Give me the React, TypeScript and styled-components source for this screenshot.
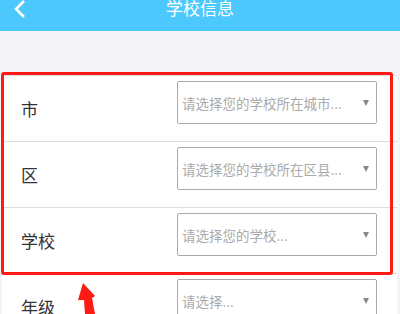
import React from "react";
import styled, { createGlobalStyle } from "styled-components";

const Global = createGlobalStyle`
  html, body { margin: 0; padding: 0; }
  body {
    background: #f4f4f8;
    font-family: "Noto Sans CJK SC", "Noto Sans", sans-serif;
    width: 400px;
    height: 314px;
    overflow: hidden;
  }
`;

const Page = styled.div`
  position: relative;
  width: 400px;
  height: 314px;
  overflow: hidden;
  background: #f4f4f8;
`;

const Header = styled.header`
  height: 31px;
  overflow: hidden;
  background: #4cc8fd;
`;

const HeaderBar = styled.div`
  height: 44px;
  margin-top: -14px;
  display: grid;
  grid-template-columns: 60px 1fr 60px;
  align-items: center;
`;

const BackButton = styled.div`
  display: flex;
  align-items: center;
  padding-left: 13px;
  padding-top: 2px;
`;

const Title = styled.h1`
  margin: 0;
  text-align: center;
  color: #ffffff;
  font-size: 17px;
  font-weight: 400;
  line-height: 44px;
`;

const Card = styled.section`
  margin: 44px 3px 0 2px;
  background: #ffffff;
  border-top: 1px solid #dddddd;
`;

const Row = styled.div`
  display: flex;
  align-items: flex-start;
  height: 65px;
  border-bottom: 1px solid #dddddd;
  padding: 0 20px 0 19px;
`;

const Label = styled.div`
  flex: 1;
  height: 65px;
  display: flex;
  align-items: center;
  font-size: 17px;
  color: #333333;
`;

const Select = styled.div`
  width: 200px;
  height: 43px;
  margin-top: 5px;
  box-sizing: border-box;
  border: 1px solid #aaaaaa;
  border-radius: 2px;
  display: flex;
  align-items: center;
  justify-content: space-between;
  padding: 0 7px 0 4px;
  font-size: 13.5px;
  color: #aaaaaa;
  white-space: nowrap;
`;

const Caret = styled.span`
  width: 0;
  height: 0;
  border-left: 3.5px solid transparent;
  border-right: 3.5px solid transparent;
  border-top: 6px solid #888888;
`;

const Highlight = styled.div`
  position: absolute;
  left: 1px;
  top: 72px;
  width: 392px;
  height: 203px;
  box-sizing: border-box;
  border: 3px solid #ff1a14;
  border-radius: 3px;
  pointer-events: none;
`;

const Pointer = styled.svg`
  position: absolute;
  left: 70px;
  top: 278px;
`;

const rows = [
  { label: "市", placeholder: "请选择您的学校所在城市..." },
  { label: "区", placeholder: "请选择您的学校所在区县..." },
  { label: "学校", placeholder: "请选择您的学校..." },
  { label: "年级", placeholder: "请选择..." },
];

export default function App() {
  return (
    <Page>
      <Global />
      <Header>
        <HeaderBar>
          <BackButton>
            <svg width="14" height="18" viewBox="0 0 14 18">
              <path d="M11 1 L3 9 L11 17" fill="none" stroke="#ffffff" strokeWidth="2.6" />
            </svg>
          </BackButton>
          <Title>学校信息</Title>
          <div />
        </HeaderBar>
      </Header>
      <Card>
        {rows.map((r) => (
          <Row key={r.label}>
            <Label>{r.label}</Label>
            <Select>
              <span>{r.placeholder}</span>
              <Caret />
            </Select>
          </Row>
        ))}
      </Card>
      <Highlight />
      <Pointer width="40" height="40" viewBox="0 0 40 40">
        <polygon points="13,5 25,18 22,20 25,36 15,36 14,22 8,22" fill="#ff1a14" />
      </Pointer>
    </Page>
  );
}
